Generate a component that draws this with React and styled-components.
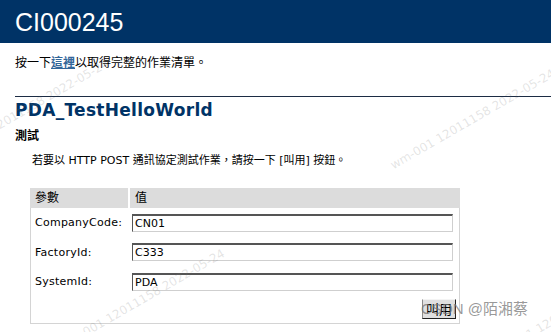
import React from 'react';
import styled, { createGlobalStyle } from 'styled-components';

const GlobalStyle = createGlobalStyle`
  html, body {
    margin: 0;
    padding: 0;
    background: #FFFFFF;
  }
  body {
    width: 551px;
    height: 332px;
    overflow: hidden;
    font-family: "DejaVu Sans", Verdana, sans-serif;
    color: #000000;
  }
`;

const cjk = `"DejaVu Sans", "Noto Sans CJK TC", sans-serif`;

const Page = styled.div`
  position: relative;
  width: 551px;
  height: 332px;
  overflow: hidden;
`;

const Banner = styled.div`
  height: 43px;
  background-color: #003366;
  display: flex;
  align-items: center;
  padding-left: 15px;
`;

const BannerTitle = styled.h1`
  margin: 2px 0 0;
  font-family: "Liberation Sans", Arial, sans-serif;
  font-weight: normal;
  font-size: 25px;
  color: #FFFFFF;
`;

const Body = styled.div`
  padding-left: 15px;
`;

const Intro = styled.p`
  margin: 12px 0 0;
  font-family: ${cjk};
  font-size: 12px;
  line-height: 16px;
`;

const Link = styled.a`
  color: #336699;
  font-weight: bold;
  text-decoration: underline;
`;

const Rule = styled.div`
  margin-top: 25px;
  border-top: 1px solid #1c2c44;
`;

const ServiceName = styled.h2`
  margin: 3px 0 0;
  font-size: 17px;
  font-weight: bold;
  line-height: 20px;
  letter-spacing: 0.3px;
  color: #003366;
`;

const OpName = styled.h3`
  margin: 8px 0 0;
  font-family: ${cjk};
  font-size: 12px;
  font-weight: bold;
  line-height: 16px;
`;

const Hint = styled.p`
  margin: 9px 0 0 17px;
  font-family: ${cjk};
  font-size: 11px;
  line-height: 16px;
`;

const Form = styled.div`
  margin: 19px 0 0 15px;
  width: 428px;
  height: 135px;
  border: 1px solid #d4d4d4;
  border-top: none;
  display: flex;
  flex-direction: column;
`;

const HeadRow = styled.div`
  display: grid;
  grid-template-columns: 98px 1fr;
  column-gap: 2px;
  height: 20px;
  margin: 0 -1px;
`;

const HeadCell = styled.div`
  background-color: #dcdcdc;
  font-family: ${cjk};
  font-size: 12px;
  line-height: 20px;
  padding-left: 5px;
`;

const Row = styled.div`
  display: grid;
  grid-template-columns: 97px 321px;
  align-items: center;
  height: 29.5px;
  padding-left: 4px;
`;

const Label = styled.span`
  font-size: 11px;
  letter-spacing: 0.25px;
`;

const Field = styled.input`
  box-sizing: border-box;
  width: 321px;
  height: 18px;
  margin: 0;
  padding: 0 0 0 2px;
  border: 1px solid #cfcfcf;
  border-top: 2px solid #555555;
  border-left: 1px solid #555555;
  font-family: "DejaVu Sans", sans-serif;
  font-size: 11px;
  color: #000;
  background: #fff;
  outline: none;
`;

const ButtonRow = styled.div`
  display: flex;
  justify-content: flex-end;
  padding: 2px 3px 0 0;
`;

const Invoke = styled.button`
  box-sizing: border-box;
  height: 20px;
  width: 34px;
  padding: 0;
  font-family: "Noto Sans CJK TC", sans-serif;
  font-size: 13px;
  line-height: 16px;
  color: #000;
  background: #e0e0e0;
  border: 1px solid;
  border-color: #f4f4f4 #222222 #222222 #8a8a8a;
`;

const Watermark = styled.span`
  position: absolute;
  left: ${p => p.x}px;
  top: ${p => p.y}px;
  transform: rotate(-30deg);
  transform-origin: left top;
  white-space: nowrap;
  font-family: "DejaVu Sans", sans-serif;
  font-size: 12px;
  color: rgba(120, 120, 120, 0.2);
  pointer-events: none;
`;

const Credit = styled.span`
  position: absolute;
  right: 23px;
  bottom: 14px;
  font-family: "Liberation Sans", "Noto Sans CJK SC", sans-serif;
  font-size: 15px;
  line-height: 18px;
  color: rgba(120, 120, 120, 0.75);
`;

const fields = [
  { name: 'CompanyCode:', value: 'CN01' },
  { name: 'FactoryId:', value: 'C333' },
  { name: 'SystemId:', value: 'PDA' },
];

export default function App() {
  return (
    <Page>
      <GlobalStyle />
      <Banner>
        <BannerTitle>CI000245</BannerTitle>
      </Banner>
      <Body>
        <Intro>按一下<Link>這裡</Link>以取得完整的作業清單。</Intro>
        <Rule />
        <ServiceName>PDA_TestHelloWorld</ServiceName>
        <OpName>測試</OpName>
        <Hint>若要以 HTTP POST 通訊協定測試作業，請按一下 [叫用] 按鈕。</Hint>
        <Form>
          <HeadRow>
            <HeadCell>參數</HeadCell>
            <HeadCell>值</HeadCell>
          </HeadRow>
          {fields.map(f => (
            <Row key={f.name}>
              <Label>{f.name}</Label>
              <Field defaultValue={f.value} />
            </Row>
          ))}
          <ButtonRow>
            <Invoke>叫用</Invoke>
          </ButtonRow>
        </Form>
      </Body>
      <Watermark x={-58} y={150}>wm-001 12011158 2022-05-24</Watermark>
      <Watermark x={388} y={160}>wm-001 12011158 2022-05-24</Watermark>
      <Watermark x={58} y={340}>wm-001 12011158 2022-05-24</Watermark>
      <Watermark x={488} y={350}>wm-001 12011158 2022-05-24</Watermark>
      <Credit>CSDN @陌湘蔡</Credit>
    </Page>
  );
}
